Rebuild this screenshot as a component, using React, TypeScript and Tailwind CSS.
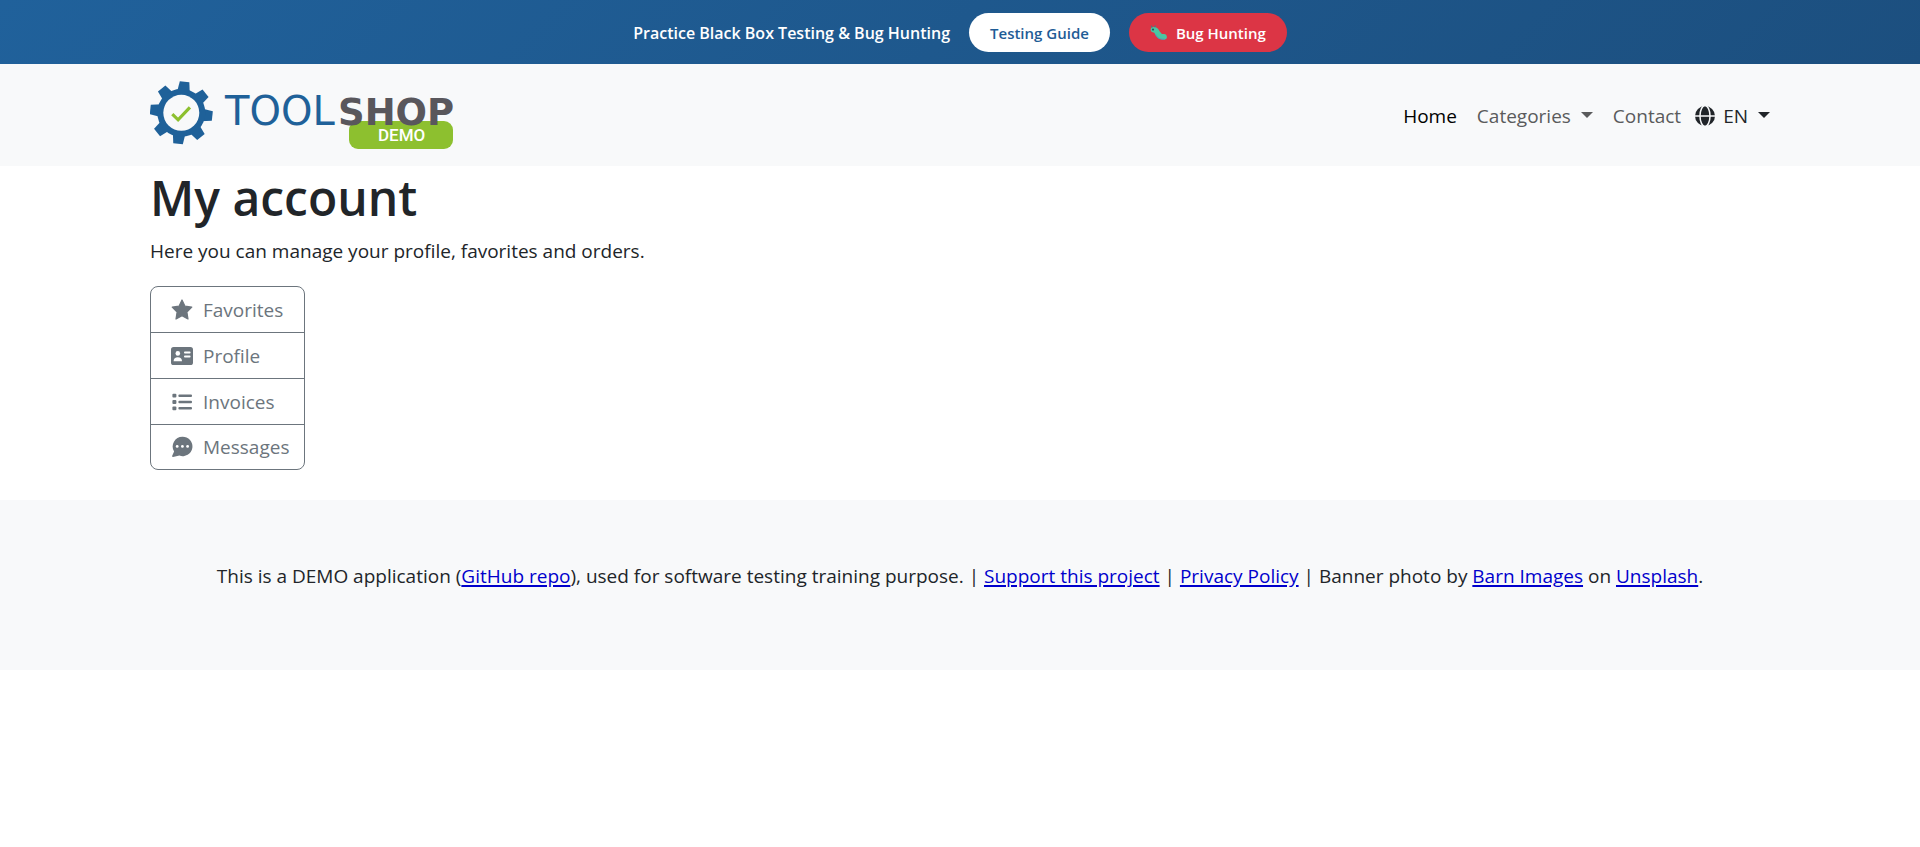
import React from "react";

const TEETH = [6, 51, 96, 141, 186, 231, 276, 321];

function Logo() {
  return (
    <svg width="308" height="70" viewBox="0 0 308 70" role="img" aria-label="Toolshop demo">
      <g transform="translate(31.3 32.8)">
        <g fill="#1f6199">
          {TEETH.map((angle) => (
            <path key={angle} d="M-6.4 -20 L-4.8 -31.2 H4.8 L6.4 -20 Z" transform={`rotate(${angle})`} />
          ))}
          <circle r="24" />
        </g>
        <circle r="18" fill="#f8f9fa" />
        <path d="M-9 1.4 L-3.2 7 L8.6 -5.4" fill="none" stroke="#8dc02f" strokeWidth="3.2" />
      </g>
      <rect x="199" y="41" width="104" height="28" rx="9" fill="#8dc02f" />
      <text x="75" y="45" fontSize="40" fill="#1f6199" fontFamily="'DejaVu Sans', sans-serif">TOOL</text>
      <text x="188" y="45" fontSize="37" fontWeight="700" fill="#59575c" fontFamily="'DejaVu Sans', sans-serif">SHOP</text>
      <text x="228" y="61" fontSize="17" fontWeight="500" fill="#ffffff" fontFamily="Roboto, sans-serif">DEMO</text>
    </svg>
  );
}

function Caterpillar() {
  return (
    <svg width="18" height="16" viewBox="0 0 18 16" aria-hidden="true">
      <path d="M3.4 4.8 C8.6 4.2 6 12.2 14.2 11.8" fill="none" stroke="#4bc6a2" strokeWidth="5.4" strokeLinecap="round" />
      <path d="M5.4 9 C7 13.4 10 14.4 15 14.2" fill="none" stroke="#4b9fc0" strokeWidth="1" />
      <path d="M2.2 2.4 L1.4 .8 M4.6 2.2 L5.4 .6" stroke="#3f7f8a" strokeWidth="1.2" />
      <circle cx="3" cy="4.6" r="1.1" fill="#235a63" />
    </svg>
  );
}

function Caret() {
  return (
    <svg width="12" height="6" viewBox="0 0 12 6" className="mb-0.5 fill-current" aria-hidden="true">
      <path d="M0 0 H12 L6 6 Z" />
    </svg>
  );
}

function Globe() {
  return (
    <svg width="20" height="20" viewBox="0 0 20 20" aria-hidden="true">
      <circle cx="10" cy="10" r="10" fill="#212529" />
      <ellipse cx="10" cy="10" rx="5" ry="10.4" fill="none" stroke="#f8f9fa" strokeWidth="1.5" />
      <path d="M0 10 H20" stroke="#f8f9fa" strokeWidth="1.5" />
    </svg>
  );
}

function Icon({ children }: { children: React.ReactNode }) {
  return (
    <svg width="22" height="22" viewBox="0 0 22 22" className="fill-current" aria-hidden="true">
      {children}
    </svg>
  );
}

const accountLinks = [
  {
    label: "Favorites",
    icon: (
      <path
        d="M11 1 L14 7.2 L20.8 8.2 L15.9 13.1 L17 20 L11 16.8 L5 20 L6.1 13.1 L1.2 8.2 L8 7.2 Z"
        stroke="currentColor"
        strokeWidth="1.2"
        strokeLinejoin="round"
      />
    ),
  },
  {
    label: "Profile",
    icon: (
      <>
        <rect x="0" y="2" width="22" height="18" rx="2.6" />
        <g fill="#ffffff">
          <circle cx="6.8" cy="8.4" r="2.3" />
          <path d="M2.6 16.2 C2.6 13.6 4.2 12.2 6.8 12.2 S11 13.6 11 16.2 Z" />
          <rect x="13" y="6.6" width="6.6" height="1.8" rx="0.9" />
          <rect x="13" y="10.6" width="6.6" height="1.8" rx="0.9" />
        </g>
      </>
    ),
  },
  {
    label: "Invoices",
    icon: (
      <>
        {[4.7, 11, 17.3].map((y) => (
          <React.Fragment key={y}>
            <rect x="1.4" y={y - 1.9} width="4" height="3.8" rx="1" />
            <rect x="7.4" y={y - 1.2} width="13.6" height="2.4" rx="1" />
          </React.Fragment>
        ))}
      </>
    ),
  },
  {
    label: "Messages",
    icon: (
      <>
        <path d="M11.4 0.8 A9.7 9.7 0 1 1 8.4 19.6 L2 21 Q0.8 21 1.2 19.8 L3.1 15.5 A9.7 9.7 0 0 1 11.4 0.8 Z" />
        <g fill="#ffffff">
          <circle cx="6.2" cy="10.4" r="1.4" />
          <circle cx="11.4" cy="10.4" r="1.4" />
          <circle cx="16.6" cy="10.4" r="1.4" />
        </g>
      </>
    ),
  },
];

function FooterLink({ children }: { children: React.ReactNode }) {
  return (
    <a href="#" className="text-[#0000cc] underline decoration-2 underline-offset-2">
      {children}
    </a>
  );
}

export default function App() {
  return (
    <div className="bg-white font-['Open_Sans',sans-serif] text-[19px] leading-[30px] text-[#212529]">
      <div className="flex h-16 items-center justify-center gap-[19px] bg-linear-135 from-[#20619b] to-[#1c4f7f] text-white">
        <span className="pt-0.5 text-base font-semibold">Practice Black Box Testing &amp; Bug Hunting</span>
        <a href="#" className="flex h-[39px] items-center rounded-full bg-white px-[21px] pt-0.5 text-[15px] font-semibold text-[#1f5c96]">
          Testing Guide
        </a>
        <a href="#" className="flex h-[39px] items-center gap-2 rounded-full bg-[#dc3545] px-[21px] pt-0.5 text-[15px] font-semibold">
          <Caterpillar />
          Bug Hunting
        </a>
      </div>

      <header className="bg-[#f8f9fa]">
        <div className="mx-auto flex h-[102px] max-w-[1650px] items-center justify-between px-[15px]">
          <a href="#">
            <Logo />
          </a>
          <nav className="flex items-center gap-5 pt-0.5">
            <a href="#" className="text-black">Home</a>
            <button type="button" className="flex items-center gap-2.5 text-[#5a5b5c]">
              Categories
              <Caret />
            </button>
            <div className="flex items-center gap-3.5">
              <a href="#" className="text-[#5a5b5c]">Contact</a>
              <button type="button" className="flex items-center gap-2.5">
                <span className="flex items-center gap-2">
                  <Globe />
                  EN
                </span>
                <Caret />
              </button>
            </div>
          </nav>
        </div>
      </header>

      <main className="mx-auto max-w-[1650px] px-[15px] pb-[30px]">
        <h1 className="pt-0.5 text-[48px] leading-[60px] font-semibold">My account</h1>
        <p className="pt-2">Here you can manage your profile, favorites and orders.</p>
        <div className="mt-5 inline-flex flex-col divide-y divide-[#6c757d] rounded-lg border border-[#6c757d] align-top text-[#6c757d]">
          {accountLinks.map(({ label, icon }) => (
            <a key={label} href="#" className="flex h-[46px] items-center gap-2.5 pr-[15px] pl-5 last:h-11">
              <Icon>{icon}</Icon>
              {label}
            </a>
          ))}
        </div>
      </main>

      <footer className="bg-[#f8f9fa] px-4 pt-[61px] pb-[79px] text-center">
        <p>
          This is a DEMO application (<FooterLink>GitHub repo</FooterLink>), used for software testing training purpose. |{" "}
          <FooterLink>Support this project</FooterLink> | <FooterLink>Privacy Policy</FooterLink> | Banner photo by{" "}
          <FooterLink>Barn Images</FooterLink> on <FooterLink>Unsplash</FooterLink>.
        </p>
      </footer>
    </div>
  );
}
